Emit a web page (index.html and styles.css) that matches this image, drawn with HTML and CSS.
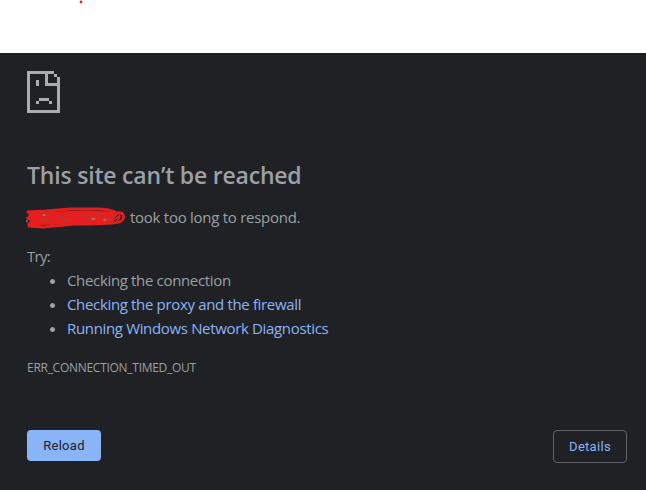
FILE: index.html
```
<!DOCTYPE html>
<html lang="en">
<head>
<meta charset="utf-8">
<title>Connection error</title>
<link rel="stylesheet" href="styles.css">
</head>
<body>
<header class="top"><svg width="6" height="5" viewBox="0 0 6 5"><circle cx="3" cy="2" r="1.4" fill="#ee1c1c"/></svg></header>
<main class="error">
  <svg class="icon" width="33" height="42" viewBox="0 0 33 42" fill="#acacac" shape-rendering="crispEdges">
    <path d="M0 0H27V3H21V12H33V15H18V3H3V39H30V6H33V42H0ZM27 3H30V6H27ZM9 9H12V15H9ZM12 27H22V30H12ZM9 30H12V33H9ZM22 30H25V33H22Z"/>
  </svg>
  <h1>This site can’t be reached</h1>
  <p class="summary">
    <svg class="scribble" width="102" height="24" viewBox="0 0 102 24" fill="none" stroke-linecap="round" stroke-linejoin="round">
      <path stroke="#e81e1e" stroke-width="7" d="M6 10L28 9L60 8L84 9L91 11L75 13L45 12L7 14L30 15L58 15L86 14"/>
      <path stroke="#e81e1e" stroke-width="3" d="M2 6L20 5L45 3H72C81 3 87 5 91 7C100 5 99 16 92 16C82 18 65 18 48 18L17 21L3 20M2 6L7 9L2 12L8 15L3 18L28 17"/>
      <path stroke="#8b4a4d" stroke-width="1" d="M14 9H23M31 10H40M57 10H63M72 8L82 7M87 10H90M64 13L73 11M15 14H24M36 14H44M60 14L69 13M77 13H84"/>
      <path stroke="#9aa0a6" stroke-width="1" d="M1 14V16M17 9H19M66 13H69M78 14H80"/>
      <path stroke="#202124" stroke-width="1" d="M89 12L92 9M88 15L91 13"/>
    </svg>
    <span>took too long to respond.</span>
  </p>
  <p class="try">Try:</p>
  <ul>
    <li><span class="one">Checking the connection</span></li>
    <li><a class="two">Checking the proxy and the firewall</a></li>
    <li><a class="three">Running Windows Network Diagnostics</a></li>
  </ul>
  <p class="code">ERR_CONNECTION_TIMED_OUT</p>
  <div class="actions">
    <button class="reload">Reload</button>
    <button class="details">Details</button>
  </div>
</main>
</body>
</html>
```
FILE: styles.css
```
* { box-sizing: border-box; }
body {
  margin: 0;
  height: 490px;
  overflow: hidden;
  background: #fff;
  color: #9aa0a6;
  font: 15px/24px "Open Sans", "Noto Sans", sans-serif;
}
.top { height: 53px; padding-left: 78px; }
.top svg, .icon { display: block; }
.error { height: 437px; padding: 18px 19px 0 27px; background: #202124; }
h1 {
  margin: 46px 0 0;
  font-size: 23px;
  line-height: 32px;
  font-weight: 600;
  letter-spacing: -.2px;
  white-space: nowrap;
}
p { margin: 0; white-space: nowrap; }
.summary { display: flex; height: 24px; margin-top: 14px; letter-spacing: -.27px; }
.scribble { flex: none; margin: 1px 2px 0 -1px; }
.try { margin-top: 15px; letter-spacing: -.7px; }
ul { margin: 0; padding: 0 0 0 40px; white-space: nowrap; letter-spacing: -.34px; }
a { color: #8ab4f8; }
.code { margin-top: 16px; font-size: 12px; letter-spacing: -.28px; }
.actions { display: flex; justify-content: space-between; align-items: flex-start; margin-top: 50px; }
button {
  width: 74px;
  height: 33px;
  padding: 0;
  border: 1px solid #5f6368;
  border-radius: 4px;
  background: transparent;
  color: #8ab4f8;
  font: 13px/16px Roboto, sans-serif;
  letter-spacing: .3px;
}
.reload { height: 31px; border: 0; background: #8ab4f8; color: #202124; }
```
